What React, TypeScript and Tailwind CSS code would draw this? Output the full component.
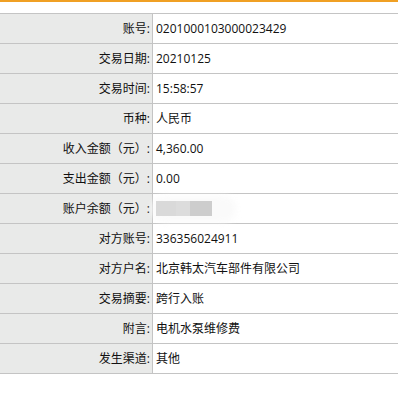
import React from 'react';

const rows: { label: string; value: string | null }[] = [
  { label: '账号:', value: '0201000103000023429' },
  { label: '交易日期:', value: '20210125' },
  { label: '交易时间:', value: '15:58:57' },
  { label: '币种:', value: '人民币' },
  { label: '收入金额（元）:', value: '4,360.00' },
  { label: '支出金额（元）:', value: '0.00' },
  { label: '账户余额（元）:', value: null },
  { label: '对方账号:', value: '336356024911' },
  { label: '对方户名:', value: '北京韩太汽车部件有限公司' },
  { label: '交易摘要:', value: '跨行入账' },
  { label: '附言:', value: '电机水泵维修费' },
  { label: '发生渠道:', value: '其他' },
];

const Blurred = () => (
  <div className="relative flex h-[16px] w-[80px] items-center">
    <div className="absolute left-[-4px] top-[-5px] h-[26px] w-[84px] rounded-full bg-[#fafafa] blur-[3px]" />
    <div className="relative flex h-[15px]">
      <div className="w-[20px] bg-[#d9d9d9]" />
      <div className="w-[14px] bg-[#dcdcdc]" />
      <div className="w-[22px] bg-[#cdcdcd]" />
    </div>
  </div>
);

export default function App() {
  return (
    <div
      className="h-[399px] w-[398px] bg-white text-[12px] text-[#111]"
      style={{ fontFamily: '"Open Sans", "Noto Sans CJK SC", sans-serif' }}
    >
      <div className="h-[2px] bg-[#f0a024]" />
      <div className="mt-[11px] border-t border-[#c4c4c4]">
        {rows.map((r) => (
          <div key={r.label} className="flex h-[30px] border-b border-[#c4c4c4]">
            <div className="flex w-[153px] items-center justify-end border-r border-[#c4c4c4] bg-[#e9eae9] pr-[2px]">
              {r.label}
            </div>
            <div className="flex flex-1 items-center pl-[3px]">
              {r.value === null ? <Blurred /> : r.value}
            </div>
          </div>
        ))}
      </div>
    </div>
  );
}
